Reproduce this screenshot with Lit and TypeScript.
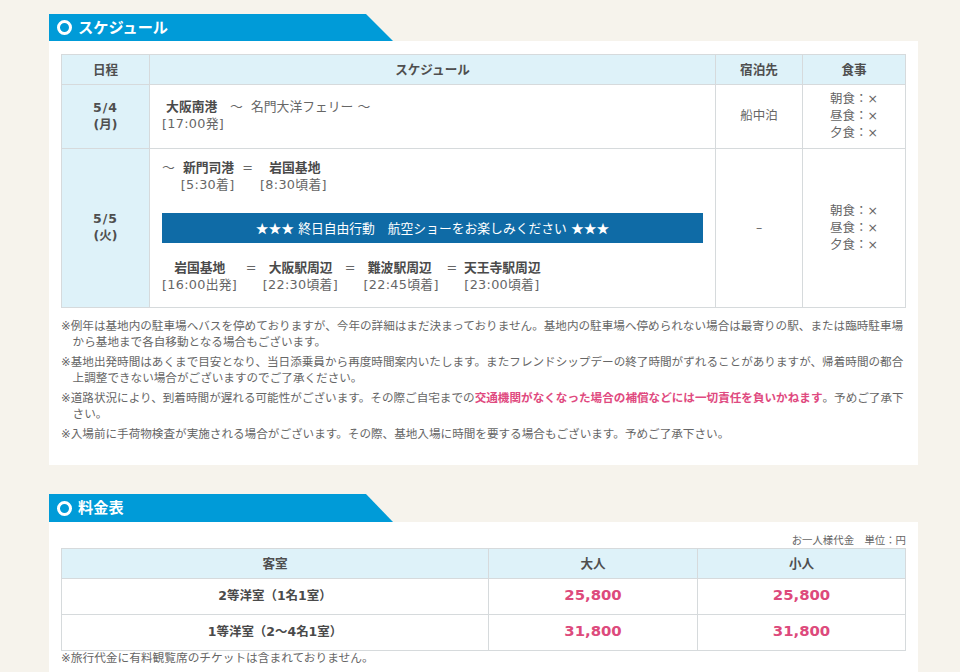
import { LitElement, html, css } from "lit";
import { customElement } from "lit/decorators.js";

const meals = html`朝食：×<br />昼食：×<br />夕食：×`;

@customElement("app-root")
export class AppRoot extends LitElement {
  static styles = css`
    :host {
      display: flex;
      flex-direction: column;
      height: 672px;
      overflow: hidden;
      box-sizing: border-box;
      padding: 14px 42px 0 49px;
      background: #f6f3ec;
      font-family: "DejaVu Sans", "Noto Sans CJK JP", sans-serif;
      font-size: 12.48px;
      line-height: 17px;
      color: #666;
    }
    .head {
      width: 344px;
      height: 27px;
      display: flex;
      align-items: center;
      gap: 6.5px;
      padding-left: 7.5px;
      box-sizing: border-box;
      background: #009bd8;
      clip-path: polygon(0 0, 317px 0, 100% 100%, 0 100%);
      color: #fff;
      font-size: 15.2px;
      font-weight: 700;
    }
    .head svg { display: block; flex: none; }
    .head span { padding-top: 1px; }
    .panel {
      background: #fff;
      padding: 13px 12px 0;
    }
    .first { height: 424px; box-sizing: border-box; margin-bottom: 29px; }
    .second { flex: 1; padding-top: 10px; }
    .head.two { height: 28px; }
    table {
      width: 844px;
      border-collapse: collapse;
      table-layout: fixed;
    }
    .c-day { width: 88px; }
    .c-plan { width: 566px; }
    .c-stay { width: 87px; }
    .c-meal { width: 103px; }
    .c-room { width: 427px; }
    .c-adult { width: 209px; }
    .c-child { width: 208px; }
    th, td {
      border: 1px solid #d6dadc;
      text-align: center;
      vertical-align: middle;
      padding: 0 0 2px;
    }
    th { background: #def2f9; color: #4f4f4f; font-weight: 700; height: 28px; padding-bottom: 1px; font-size: 12.6px; }
    td.day { background: #def2f9; color: #4f4f4f; font-weight: 700; }
    .date { letter-spacing: 1px; }
    td.plan { text-align: left; padding: 0 12px 4px; font-size: 12.8px; }
    b { color: #4a4a4a; }
    .t { letter-spacing: 0.3px; margin-right: 1.2px; }
    .r1 { height: 64px; }
    .r2 { height: 159px; }
    .band {
      background: #0f6ba6;
      color: #fff;
      height: 30px;
      line-height: 29px;
      text-align: center;
      margin: 20px 0 16px;
    }
    .stars { font-family: "Noto Sans CJK JP", sans-serif; }
    .notes { margin-top: 10px; font-size: 11.6px; line-height: 16px; }
    .notes p { margin: 0 0 4px; padding-left: 11.6px; text-indent: -11.6px; }
    .notes em { font-style: normal; font-weight: 700; color: #df4a80; }
    .unit { font-size: 10.4px; line-height: 16px; text-align: right; }
    .fare th { height: 29px; padding-bottom: 0; }
    .fare td { height: 33px; font-weight: 700; color: #4a4a4a; }
    .fare td.price { font-size: 14.9px; color: #dd4a7c; }
    .foot { font-size: 11.7px; line-height: 14px; }
  `;

  private head(title: string, extra = "") {
    return html`<div class="head ${extra}">
      <svg width="15" height="15" viewBox="0 0 15 15"><circle cx="7.5" cy="7.5" r="6" fill="none" stroke="#fff" stroke-width="3" /></svg>
      <span>${title}</span>
    </div>`;
  }

  render() {
    return html`
      ${this.head("スケジュール")}
      <div class="panel first">
        <table>
          <colgroup><col class="c-day" /><col class="c-plan" /><col class="c-stay" /><col class="c-meal" /></colgroup>
          <tr><th>日程</th><th>スケジュール</th><th>宿泊先</th><th>食事</th></tr>
          <tr class="r1">
            <td class="day"><span class="date">5/4</span><br />(月)</td>
            <td class="plan">&nbsp;<b>大阪南港</b>　～&nbsp;&nbsp;名門大洋フェリー ～<br /><span class="t">[17:00発]</span></td>
            <td>船中泊</td>
            <td>${meals}</td>
          </tr>
          <tr class="r2">
            <td class="day"><span class="date">5/5</span><br />(火)</td>
            <td class="plan">
              ～&nbsp;&nbsp;<b>新門司港</b>&nbsp;&nbsp;=&nbsp;&nbsp;&nbsp;&nbsp;<b>岩国基地</b><br />
              &nbsp;&nbsp;&nbsp;&nbsp;&#x2009;<span class="t">[5:30着]</span>&nbsp;&nbsp;&nbsp;&nbsp;&nbsp;&nbsp;<span class="t">[8:30頃着]</span>
              <div class="band"><span class="stars">★★★</span> 終日自由行動　航空ショーをお楽しみください <span class="stars">★★★</span></div>
              &nbsp;&nbsp;&nbsp;<b>岩国基地</b>&nbsp;&nbsp;&nbsp;&nbsp;&nbsp;=&nbsp;&nbsp;&nbsp;<b>大阪駅周辺</b>&nbsp;&nbsp;&nbsp;=&nbsp;&nbsp;&nbsp;<b>難波駅周辺</b>&nbsp;&nbsp;&nbsp;&#x2009;=&nbsp;&#x2009;<b>天王寺駅周辺</b><br />
              <span class="t">[16:00出発]</span>&nbsp;&nbsp;&nbsp;&nbsp;&nbsp;&nbsp;<span class="t">[22:30頃着]</span>&nbsp;&nbsp;&nbsp;&nbsp;&nbsp;&nbsp;<span class="t">[22:45頃着]</span>&nbsp;&nbsp;&nbsp;&nbsp;&nbsp;&nbsp;<span class="t">[23:00頃着]</span>
            </td>
            <td>–</td>
            <td>${meals}</td>
          </tr>
        </table>
        <div class="notes">
          <p>※例年は基地内の駐車場へバスを停めておりますが、今年の詳細はまだ決まっておりません。基地内の駐車場へ停められない場合は最寄りの駅、または臨時駐車場から基地まで各自移動となる場合もございます。</p>
          <p>※基地出発時間はあくまで目安となり、当日添乗員から再度時間案内いたします。またフレンドシップデーの終了時間がずれることがありますが、帰着時間の都合上調整できない場合がございますのでご了承ください。</p>
          <p>※道路状況により、到着時間が遅れる可能性がございます。その際ご自宅までの<em>交通機関がなくなった場合の補償などには一切責任を負いかねます</em>。予めご了承下<br />さい。</p>
          <p>※入場前に手荷物検査が実施される場合がございます。その際、基地入場に時間を要する場合もございます。予めご了承下さい。</p>
        </div>
      </div>
      ${this.head("料金表", "two")}
      <div class="panel second">
        <div class="unit">お一人様代金　単位：円</div>
        <table class="fare">
          <colgroup><col class="c-room" /><col class="c-adult" /><col class="c-child" /></colgroup>
          <tr><th>客室</th><th>大人</th><th>小人</th></tr>
          <tr><td>2等洋室（1名1室）</td><td class="price">25,800</td><td class="price">25,800</td></tr>
          <tr><td>1等洋室（2～4名1室）</td><td class="price">31,800</td><td class="price">31,800</td></tr>
        </table>
        <div class="foot">※旅行代金に有料観覧席のチケットは含まれておりません。</div>
      </div>
    `;
  }
}
